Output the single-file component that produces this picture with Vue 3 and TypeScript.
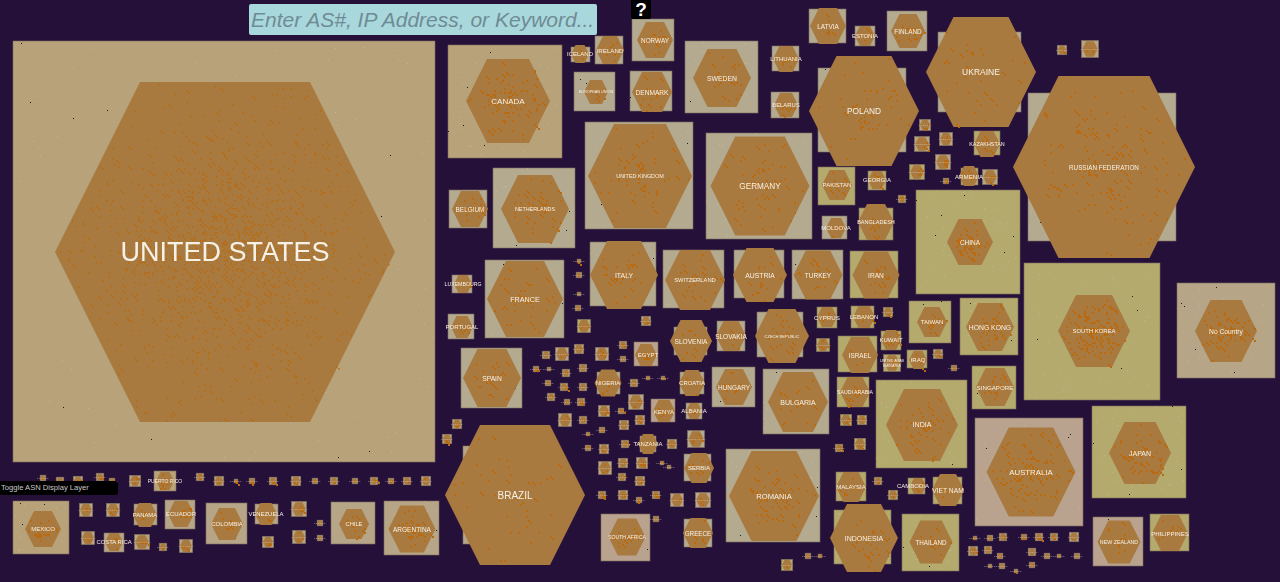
<template>
  <div class="map">
    <svg class="canvas" width="1280" height="582" viewBox="0 0 1280 582">
      <g v-for="n in nodes" :key="n.id">
        <rect class="tile" :x="n.x" :y="n.y" :width="n.w" :height="n.h" :fill="n.tint" />
        <path v-if="n.pale" :d="n.pale" fill="#cdbf9f" opacity="0.6" />
        <path v-if="n.specks" :d="n.specks" fill="#1c1a14" />
        <polygon :points="n.hex" fill="#a97a40" />
        <path :d="n.dots" fill="#b86b12" />
      </g>
      <line
        v-for="t in stubs"
        :key="t.id"
        class="stub"
        :x1="t.x1"
        :x2="t.x2"
        :y1="t.y"
        :y2="t.y"
      />
      <text
        v-for="n in labelled"
        :key="n.id"
        class="lbl"
        :x="n.lx"
        :y="n.cy"
        :font-size="n.fs"
      >{{ n.label }}</text>
      <text class="lbl" x="892" y="360.5" font-size="3.6">UNITED ARAB</text>
      <text class="lbl" x="892" y="365.5" font-size="3.6">EMIRATES</text>
    </svg>

    <input class="search" type="text" placeholder="Enter AS#, IP Address, or Keyword..." />
    <button class="help" type="button">?</button>
    <button class="toggle" type="button">Toggle ASN Display Layer</button>
  </div>
</template>

<script setup lang="ts">
type Tint = 'na' | 'eu' | 'as' | 'pk' | 'sa'

interface Country {
  label: string
  box: [number, number, number, number] // x1, y1, x2, y2
  hex: [number, number, number] // cx, cy, r
  fs: number
  tint: Tint
  density?: number
  shift?: number
}

const tints: Record<Tint, string> = {
  na: '#b8a279',
  eu: '#b3aa90',
  as: '#b4aa6d',
  pk: '#b9a38f',
  sa: '#b6a586',
}

const c = (
  label: string,
  box: Country['box'],
  hex: Country['hex'],
  fs: number,
  tint: Tint,
  density = 0.02,
  shift = 0,
): Country => ({ label, box, hex, fs, tint, density, shift })

const countries: Country[] = [
  c('UNITED STATES', [13, 41, 435, 462], [225, 252, 170], 27, 'na', 0.02),
  c('CANADA', [448, 45, 562, 158], [508, 101, 42], 8, 'na', 0.024),
  c('ICELAND', [571, 47, 590, 62], [580, 54, 9], 6, 'eu'),
  c('IRELAND', [595, 36, 623, 64], [610, 50, 14], 6.2, 'eu'),
  c('NORWAY', [632, 19, 674, 61], [655, 40, 18], 6.4, 'eu'),
  c('EUROPEAN UNION', [574, 72, 615, 111], [596, 92, 12], 3.8, 'eu'),
  c('DENMARK', [630, 71, 672, 111], [652, 92, 20], 6.6, 'eu'),
  c('SWEDEN', [685, 41, 758, 113], [722, 78, 29], 6.8, 'eu', 0.012),
  c('LITHUANIA', [772, 46, 799, 71], [786, 59, 13], 6, 'eu'),
  c('BELARUS', [771, 92, 799, 118], [786, 105, 12], 5.9, 'eu'),
  c('LATVIA', [809, 9, 846, 43], [828, 26, 18], 6.4, 'eu', 0.012),
  c('ESTONIA', [855, 26, 875, 46], [865, 36, 10], 6, 'eu'),
  c('FINLAND', [887, 11, 927, 51], [908, 31, 17], 6.4, 'eu'),
  c('POLAND', [818, 68, 906, 152], [864, 111, 55], 8.3, 'eu', 0.008),
  c('UKRAINE', [938, 32, 1021, 112], [981, 72, 55], 8.5, 'eu', 0.005),
  c('RUSSIAN FEDERATION', [1028, 93, 1176, 241], [1104, 167, 91], 6.3, 'eu', 0.008),
  c('KAZAKHSTAN', [974, 131, 1000, 155], [987, 144, 13], 5.4, 'as'),
  c('GEORGIA', [868, 171, 886, 190], [877, 180, 9], 6, 'as'),
  c('ARMENIA', [961, 168, 978, 185], [969, 176, 10], 6.2, 'as'),
  c('PAKISTAN', [818, 167, 855, 205], [837, 185, 15], 6, 'as'),
  c('UNITED KINGDOM', [585, 122, 693, 229], [640, 176, 52], 5.4, 'eu', 0.012),
  c('GERMANY', [706, 133, 812, 239], [760, 186, 49.5], 8.2, 'eu', 0.012),
  c('BELGIUM', [449, 190, 487, 228], [470, 209, 18], 6.4, 'eu'),
  c('NETHERLANDS', [493, 168, 575, 248], [535, 209, 34], 5.4, 'eu', 0.018),
  c('ITALY', [590, 242, 656, 306], [624, 275, 34], 6.9, 'eu', 0.012),
  c('SWITZERLAND', [663, 250, 724, 308], [695, 280, 30], 5.8, 'eu', 0.012),
  c('FRANCE', [485, 260, 564, 338], [525, 299, 38], 7.2, 'eu', 0.012),
  c('LUXEMBOURG', [452, 275, 472, 293], [463, 284, 9], 5.2, 'eu'),
  c('PORTUGAL', [448, 314, 474, 339], [462, 327, 11], 6, 'eu'),
  c('SPAIN', [461, 348, 522, 408], [492, 378, 29], 6.7, 'eu', 0.012),
  c('BRAZIL', [463, 446, 545, 544], [515, 495, 70], 10, 'sa', 0.004),
  c('SOUTH AFRICA', [601, 514, 650, 561], [627, 537, 18.5], 5.1, 'pk'),
  c('GREECE', [684, 519, 712, 547], [698, 533, 15], 6.3, 'eu', 0.012),
  c('SERBIA', [684, 454, 711, 481], [699, 468, 15], 6, 'eu', 0.012),
  c('ROMANIA', [726, 449, 820, 542], [774, 496, 45], 7.6, 'eu', 0.014),
  c('BULGARIA', [763, 369, 829, 434], [798, 402, 30], 7, 'eu', 0.012),
  c('HUNGARY', [712, 367, 755, 407], [734, 387, 18], 6.4, 'eu'),
  c('SLOVENIA', [674, 327, 707, 355], [691, 341, 21], 6.6, 'eu', 0.012),
  c('SLOVAKIA', [717, 321, 745, 351], [731, 336, 15], 6.5, 'eu', 0.012),
  c('CZECH REPUBLIC', [757, 312, 803, 357], [782, 336, 27], 4, 'eu', 0.012),
  c('AUSTRIA', [734, 250, 784, 298], [760, 275, 27], 6.8, 'eu', 0.012),
  c('TURKEY', [792, 250, 843, 299], [818, 275, 24.5], 6.5, 'eu', 0.012),
  c('IRAN', [850, 251, 898, 298], [876, 275, 23.5], 6.6, 'as', 0.016),
  c('CHINA', [916, 190, 1020, 294], [970, 242, 23], 6.5, 'as', 0.045),
  c('MOLDOVA', [822, 216, 847, 239], [836, 228, 10], 6, 'eu'),
  c('BANGLADESH', [859, 208, 893, 240], [876, 222, 18], 5.5, 'as', 0.012),
  c('CYPRUS', [817, 307, 837, 328], [827, 317, 10], 6.2, 'as'),
  c('LEBANON', [851, 306, 874, 328], [864, 317, 11], 6, 'as'),
  c('TAIWAN', [909, 301, 951, 343], [932, 322, 15], 6, 'as', 0.025),
  c('HONG KONG', [960, 298, 1018, 355], [990, 327, 24], 6.8, 'as', 0.03),
  c('KUWAIT', [881, 331, 901, 350], [891, 340, 10], 6, 'as'),
  c('ISRAEL', [838, 336, 877, 372], [860, 355, 18], 6.3, 'as', 0.012),
  c('SAUDI ARABIA', [837, 377, 869, 407], [855, 392, 15], 5.2, 'as'),
  c('IRAQ', [907, 350, 927, 368], [918, 360, 9], 6, 'as'),
  c('SINGAPORE', [972, 366, 1016, 409], [995, 387, 19], 6.2, 'as'),
  c('INDIA', [876, 380, 967, 468], [922, 425, 36], 7.1, 'as', 0.018),
  c('AUSTRALIA', [975, 418, 1083, 526], [1031, 472, 44.5], 7.8, 'pk', 0.026),
  c('SOUTH KOREA', [1024, 263, 1160, 400], [1094, 331, 36], 5.9, 'as', 0.05),
  c('No Country', [1177, 283, 1275, 378], [1226, 331, 31], 6.7, 'sa', 0.035),
  c('JAPAN', [1092, 406, 1186, 498], [1140, 453, 31], 7, 'as', 0.028),
  c('NEW ZEALAND', [1093, 517, 1143, 566], [1119, 542, 21.5], 5.3, 'pk', 0.012),
  c('PHILIPPINES', [1150, 514, 1189, 551], [1170, 533, 18], 6.1, 'as', 0.012),
  c('THAILAND', [902, 514, 959, 571], [931, 542, 21.5], 6.3, 'as', 0.012),
  c('INDONESIA', [834, 510, 891, 564], [864, 538, 34], 7, 'as', 0.012),
  c('MALAYSIA', [836, 472, 866, 501], [851, 487, 15], 6, 'as', 0.012),
  c('VIET NAM', [933, 477, 962, 504], [948, 490, 16], 6.7, 'as', 0.008),
  c('CAMBODIA', [908, 478, 925, 494], [918, 486, 8], 6, 'as', 0.02, -5),
  c('MEXICO', [13, 501, 69, 554], [43, 529, 18], 6, 'na', 0.025),
  c('PANAMA', [134, 504, 157, 525], [145, 515, 12], 5.9, 'sa'),
  c('ECUADOR', [165, 500, 195, 529], [181, 514, 13], 6, 'sa'),
  c('COLOMBIA', [206, 503, 247, 544], [227, 524, 16], 6, 'sa', 0.025),
  c('VENEZUELA', [255, 504, 278, 524], [266, 514, 11], 5.9, 'sa'),
  c('CHILE', [331, 502, 375, 544], [354, 524, 15], 5.7, 'sa', 0.025),
  c('ARGENTINA', [384, 501, 439, 555], [412, 529, 23.5], 6.5, 'sa', 0.025),
  c('COSTA RICA', [104, 533, 124, 552], [114, 542, 9], 5.9, 'sa'),
  c('PUERTO RICO', [154, 471, 176, 491], [165, 481, 9], 5, 'na', 0.03),
  c('EGYPT', [634, 342, 658, 366], [646, 355, 11], 6, 'pk', 0.03, 2),
  c('NIGERIA', [597, 372, 620, 394], [608, 383, 13.5], 6, 'eu'),
  c('CROATIA', [680, 372, 704, 394], [692, 383, 13], 5.9, 'eu'),
  c('KENYA', [651, 399, 675, 422], [664, 411, 11], 6.2, 'pk', 0.03),
  c('ALBANIA', [686, 403, 702, 419], [694, 411, 8], 6, 'eu'),
  c('TANZANIA', [640, 436, 656, 452], [648, 444, 10], 6, 'pk'),
]

// the small systems whose labels are too small to read: cx, cy, r, tint
const tiny: [number, number, number, Tint?][] = [
  [1062, 50, 5], [1090, 49, 9], [925, 125, 6], [922, 144, 8], [946, 139, 7], [943, 162, 8],
  [917, 172, 8, 'as'], [990, 177, 8], [946, 181, 3], [902, 199, 4, 'as'], [888, 312, 5, 'as'],
  [823, 345, 7, 'as'], [892, 363, 9, 'as'], [938, 354, 5], [954, 368, 3], [846, 420, 6, 'as'],
  [862, 420, 5, 'as'], [839, 448, 4, 'as'], [860, 444, 6, 'as'], [878, 481, 4, 'as'], [893, 495, 5, 'as'],
  [787, 565, 6, 'as'], [808, 556, 3], [820, 556, 2], [975, 538, 2], [990, 538, 3], [1003, 537, 4],
  [1024, 537, 3], [1039, 537, 4], [1054, 537, 4], [1074, 537, 5], [973, 551, 5], [988, 550, 4],
  [1000, 556, 3], [1032, 552, 4], [1047, 556, 3], [1059, 556, 2], [1077, 556, 3], [990, 566, 2],
  [1002, 566, 3], [1032, 565, 3], [1016, 571, 2],
  [86, 510, 7], [113, 510, 7], [88, 538, 7], [142, 542, 8], [163, 547, 4], [186, 546, 7],
  [268, 542, 6], [299, 537, 7], [299, 509, 8], [320, 523, 3], [320, 538, 3],
  [43, 478, 3], [60, 481, 4], [78, 481, 5], [100, 477, 4], [112, 481, 3], [135, 481, 6], [200, 477, 4],
  [219, 481, 5], [236, 481, 2], [252, 481, 3], [273, 481, 4], [296, 481, 5], [315, 481, 3], [334, 481, 4],
  [355, 481, 3], [374, 481, 4], [391, 481, 3], [407, 481, 4], [426, 481, 5],
  [457, 424, 5], [447, 439, 5], [579, 261, 2], [579, 275, 3], [579, 294, 2], [578, 308, 3],
  [584, 326, 7, 'as'], [646, 321, 5], [546, 355, 4], [562, 354, 7, 'pk'], [579, 349, 5], [602, 354, 7, 'pk'],
  [623, 345, 4], [623, 359, 3], [536, 369, 3], [549, 369, 2], [566, 373, 4], [583, 368, 4], [548, 383, 3],
  [564, 387, 4], [583, 387, 4], [634, 383, 4], [648, 378, 2], [663, 378, 2],
  [551, 397, 4], [567, 402, 3], [581, 402, 4], [565, 420, 7], [583, 420, 4], [604, 411, 6], [621, 411, 3],
  [636, 402, 8], [624, 425, 5], [640, 420, 5], [602, 430, 3], [588, 434, 2], [625, 444, 4], [672, 444, 5],
  [696, 439, 9, 'eu'], [588, 448, 3], [604, 449, 5], [605, 468, 7], [623, 463, 5], [642, 463, 6], [662, 463, 2],
  [669, 467, 2], [622, 477, 4], [640, 481, 5], [602, 495, 4], [623, 495, 5], [639, 500, 3], [656, 495, 4],
  [677, 500, 7, 'pk'], [703, 500, 8, 'eu'], [656, 519, 3],
]

// small seeded generator so the speckle stays the same on every run
const rng = (seed: number) => () => {
  seed = (seed + 0x6d2b79f5) | 0
  let t = Math.imul(seed ^ (seed >>> 15), 1 | seed)
  t = (t + Math.imul(t ^ (t >>> 7), 61 | t)) ^ t
  return ((t ^ (t >>> 14)) >>> 0) / 4294967296
}

const hexPoints = (cx: number, cy: number, r: number) =>
  [
    [cx - r, cy],
    [cx - r / 2, cy - r],
    [cx + r / 2, cy - r],
    [cx + r, cy],
    [cx + r / 2, cy + r],
    [cx - r / 2, cy + r],
  ]
    .map((p) => p.join(','))
    .join(' ')

const inHex = (dx: number, dy: number, r: number) =>
  Math.abs(dy) < r - 1 && Math.abs(dx) + Math.abs(dy) / 2 < r - 1

const hexDots = (cx: number, cy: number, r: number, density: number, rand: () => number) => {
  const count = Math.max(2, Math.round(2.6 * r * r * density))
  const size = r > 100 ? 1.6 : 2
  let d = ''
  for (let i = 0; i < count; i++) {
    const near = rand() < 0.6
    const dx = near ? (rand() + rand() - 1) * r * 0.75 : (rand() * 2 - 1) * r
    const dy = near ? (rand() + rand() - 1) * r * 0.75 : (rand() * 2 - 1) * r
    if (!inHex(dx, dy, r)) continue
    // the dots sit on a loose 2px lattice, and often run in short chains
    const x = Math.round((cx + dx) / 2) * 2
    const y = Math.round((cy + dy) / 2) * 2
    d += `M${x} ${y}h${size}v${size}h-${size}z`
    if (rand() < 0.25) d += `M${x + 2} ${y + 2}h${size}v${size}h-${size}z`
  }
  return d
}

const boxSpecks = (x: number, y: number, w: number, h: number, count: number, s: number, rand: () => number) => {
  let d = ''
  for (let i = 0; i < count; i++) {
    const px = Math.round(x + rand() * (w - 2))
    const py = Math.round(y + rand() * (h - 2))
    d += `M${px} ${py}h${s}v${s}h-${s}z`
  }
  return d
}

const nodes = [
  ...countries.map((n, i) => {
    const rand = rng(i * 97 + 11)
    const [x1, y1, x2, y2] = n.box
    const [cx, cy, r] = n.hex
    const w = x2 - x1
    const h = y2 - y1
    return {
      id: n.label,
      label: n.label,
      x: x1,
      y: y1,
      w,
      h,
      cy,
      lx: cx + (n.shift ?? 0),
      fs: n.fs,
      tint: tints[n.tint],
      hex: hexPoints(cx, cy, r),
      dots: hexDots(cx, cy, r, n.density ?? 0.02, rand),
      pale: w > 50 ? boxSpecks(x1, y1, w, h, Math.round(w / 3), 1, rand) : '',
      specks: w > 40 ? boxSpecks(x1, y1, w, h, Math.round(w / 18), 1, rand) : '',
    }
  }),
  ...tiny.map(([cx, cy, r, tint], i) => {
    const s = r * 0.95
    return {
      id: `t${i}`,
      label: '',
      x: cx - s,
      y: cy - s,
      w: s * 2,
      h: s * 2,
      cy,
      lx: cx,
      fs: 0,
      tint: tints[tint ?? 'sa'],
      hex: hexPoints(cx, cy, r * 0.85),
      dots: hexDots(cx, cy, r * 0.85, 0.04, rng(i * 53 + 7)),
      pale: '',
      specks: '',
    }
  }),
]

const labelled = nodes.filter((n) => n.label)

// unreadable labels show up as a thin pale smear across the node
const stubs = tiny.map(([cx, cy, r], i) => {
  const half = Math.max(r * 1.05, 6)
  return { id: `s${i}`, x1: cx - half, x2: cx + half, y: cy + 0.5 }
})
</script>

<style>
html,
body {
  margin: 0;
  background: #25103a;
  overflow: hidden;
}
</style>

<style scoped>
.map {
  position: relative;
  width: 1280px;
  height: 582px;
  background: #25103a;
  overflow: hidden;
  font-family: "Liberation Sans", Arial, sans-serif;
}

/* the source capture is soft, so take the hard edge off the whole canvas */
.canvas {
  display: block;
  filter: blur(0.4px);
}

.tile {
  stroke: #7d6c5c;
  stroke-width: 0.6;
}

.stub {
  stroke: #ded6c8;
  stroke-width: 0.8;
  stroke-dasharray: 1.4 0.6;
  opacity: 0.45;
}

.lbl {
  font-family: "Liberation Sans", Arial, sans-serif;
  fill: #f6f1e6;
  text-anchor: middle;
  dominant-baseline: central;
}

.search {
  position: absolute;
  left: 249px;
  top: 4px;
  width: 348px;
  height: 31px;
  box-sizing: border-box;
  padding: 0 2px;
  border: none;
  border-radius: 2px;
  outline: none;
  background: #a9d8dc;
  color: #6f8b94;
  font: italic 21px "Liberation Sans", Arial, sans-serif;
}

.search::placeholder {
  color: #6f8b94;
  opacity: 1;
}

.help {
  position: absolute;
  left: 631px;
  top: 0;
  width: 20px;
  height: 19px;
  padding: 0;
  border: none;
  border-radius: 0 0 2px 2px;
  background: #000;
  color: #fff;
  font: bold 19px/19px "Liberation Sans", Arial, sans-serif;
}

.toggle {
  position: absolute;
  left: 0;
  top: 481px;
  width: 118px;
  height: 14px;
  padding: 0 0 0 1px;
  border: none;
  border-radius: 0 3px 3px 0;
  background: #000;
  color: #c9c9c9;
  text-align: left;
  font: 7.6px/14px "Liberation Sans", Arial, sans-serif;
}
</style>
